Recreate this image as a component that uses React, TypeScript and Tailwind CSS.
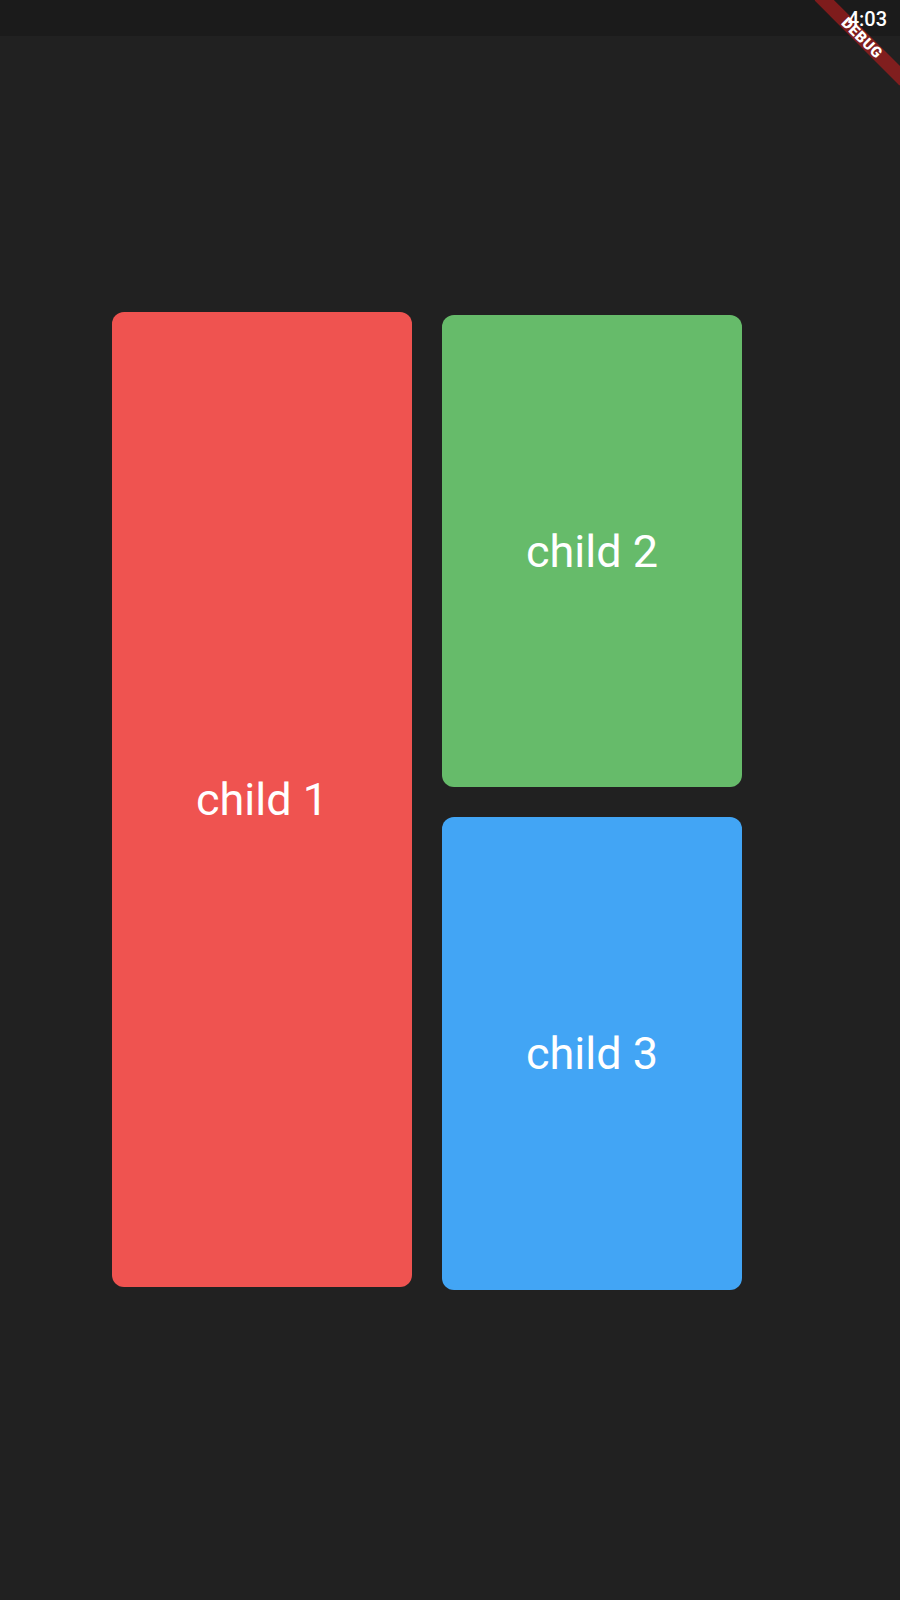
import React from "react";

export default function App() {
  return (
    <div
      className="relative w-[900px] h-[1600px] overflow-hidden bg-[#212121]"
      style={{ fontFamily: "Roboto, 'Noto Sans', sans-serif" }}
    >
      <div className="h-[36px] bg-[#1b1b1b] flex justify-end pr-[13px]">
        <span className="relative z-10 mt-[1px] text-[20px] leading-[36px] font-medium text-white">4:03</span>
      </div>

      <div className="flex items-start pl-[112px] pt-[276px]">
        <div className="w-[300px] h-[975px] rounded-[12px] bg-[#EF5350] flex items-center justify-center">
          <span className="text-[45px] text-white leading-none">child 1</span>
        </div>
        <div className="ml-[30px] mt-[3px] flex flex-col gap-[30px]">
          <div className="w-[300px] h-[472px] rounded-[12px] bg-[#66BB6A] flex items-center justify-center">
            <span className="text-[45px] text-white leading-none">child 2</span>
          </div>
          <div className="w-[300px] h-[473px] rounded-[12px] bg-[#42A5F5] flex items-center justify-center">
            <span className="text-[45px] text-white leading-none">child 3</span>
          </div>
        </div>
      </div>

      <div className="absolute left-[802px] top-[31px] w-[120px] h-[14px] rotate-45 bg-[#b71c1c]/63 flex items-center justify-center">
        <span className="text-[15px] font-black text-white leading-none tracking-[0.5px]">DEBUG</span>
      </div>
    </div>
  );
}
